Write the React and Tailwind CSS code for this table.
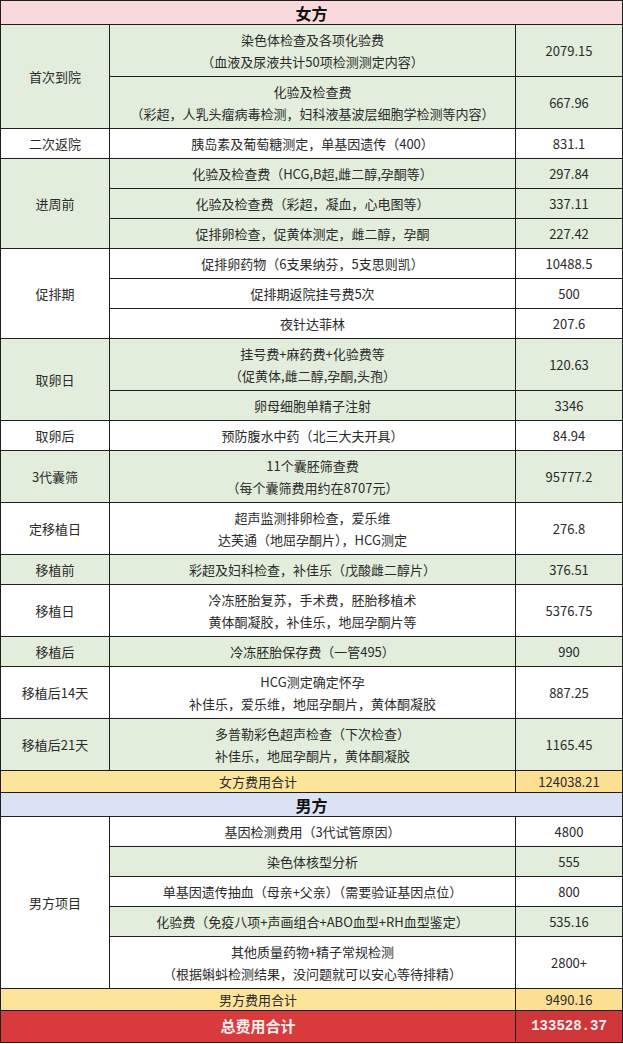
import React from "react";

const GREEN = "bg-[#e2eedb]";
const WHITE = "bg-white";

const female = [
  {
    label: "首次到院",
    bg: GREEN,
    items: [
      { lines: ["染色体检查及各项化验费", "（血液及尿液共计50项检测测定内容）"], value: "2079.15" },
      { lines: ["化验及检查费", "（彩超，人乳头瘤病毒检测，妇科液基波层细胞学检测等内容）"], value: "667.96" },
    ],
  },
  { label: "二次返院", bg: WHITE, items: [{ lines: ["胰岛素及葡萄糖测定，单基因遗传（400）"], value: "831.1" }] },
  {
    label: "进周前",
    bg: GREEN,
    items: [
      { lines: ["化验及检查费（HCG,B超,雌二醇,孕酮等）"], value: "297.84" },
      { lines: ["化验及检查费（彩超，凝血，心电图等）"], value: "337.11" },
      { lines: ["促排卵检查，促黄体测定，雌二醇，孕酮"], value: "227.42" },
    ],
  },
  {
    label: "促排期",
    bg: WHITE,
    items: [
      { lines: ["促排卵药物（6支果纳芬，5支思则凯）"], value: "10488.5" },
      { lines: ["促排期返院挂号费5次"], value: "500" },
      { lines: ["夜针达菲林"], value: "207.6" },
    ],
  },
  {
    label: "取卵日",
    bg: GREEN,
    items: [
      { lines: ["挂号费+麻药费+化验费等", "（促黄体,雌二醇,孕酮,头孢）"], value: "120.63" },
      { lines: ["卵母细胞单精子注射"], value: "3346" },
    ],
  },
  { label: "取卵后", bg: WHITE, items: [{ lines: ["预防腹水中药（北三大夫开具）"], value: "84.94" }] },
  { label: "3代囊筛", bg: GREEN, items: [{ lines: ["11个囊胚筛查费", "（每个囊筛费用约在8707元）"], value: "95777.2" }] },
  { label: "定移植日", bg: WHITE, items: [{ lines: ["超声监测排卵检查，爱乐维", "达芙通（地屈孕酮片），HCG测定"], value: "276.8" }] },
  { label: "移植前", bg: GREEN, items: [{ lines: ["彩超及妇科检查，补佳乐（戊酸雌二醇片）"], value: "376.51" }] },
  { label: "移植日", bg: WHITE, items: [{ lines: ["冷冻胚胎复苏，手术费，胚胎移植术", "黄体酮凝胶，补佳乐，地屈孕酮片等"], value: "5376.75" }] },
  { label: "移植后", bg: GREEN, items: [{ lines: ["冷冻胚胎保存费（一管495）"], value: "990" }] },
  { label: "移植后14天", bg: WHITE, items: [{ lines: ["HCG测定确定怀孕", "补佳乐，爱乐维，地屈孕酮片，黄体酮凝胶"], value: "887.25" }] },
  { label: "移植后21天", bg: GREEN, items: [{ lines: ["多普勒彩色超声检查（下次检查）", "补佳乐，地屈孕酮片，黄体酮凝胶"], value: "1165.45" }] },
];

const male = [
  {
    label: "男方项目",
    bg: WHITE,
    items: [
      { lines: ["基因检测费用（3代试管原因）"], value: "4800", bg: WHITE },
      { lines: ["染色体核型分析"], value: "555", bg: GREEN },
      { lines: ["单基因遗传抽血（母亲+父亲）（需要验证基因点位）"], value: "800", bg: WHITE },
      { lines: ["化验费（免疫八项+声画组合+ABO血型+RH血型鉴定）"], value: "535.16", bg: GREEN },
      { lines: ["其他质量药物+精子常规检测", "（根据蝌蚪检测结果，没问题就可以安心等待排精）"], value: "2800+", bg: WHITE },
    ],
  },
];

const SPAN = {
  1: "row-span-1",
  2: "row-span-2",
  3: "row-span-3",
  5: "row-span-5",
};

function Group({ g }) {
  return (
    <>
      <div className={`${SPAN[g.items.length]} col-start-1 ${g.bg} flex items-center justify-center text-[13px]`}>
        {g.label}
      </div>
      {g.items.map((it, i) => {
        const bg = it.bg || g.bg;
        const h = it.lines.length > 1 ? "h-[51px]" : "h-[29px]";
        return (
          <React.Fragment key={i}>
            <div className={`col-start-2 ${bg} ${h} flex flex-col items-center justify-center text-[13px] leading-[22px] text-center`}>
              {it.lines.map((l, j) => (
                <div key={j} className="whitespace-nowrap">{l}</div>
              ))}
            </div>
            <div className={`col-start-3 ${bg} ${h} flex items-center justify-center text-[13px]`}>{it.value}</div>
          </React.Fragment>
        );
      })}
    </>
  );
}

export default function App() {
  return (
    <div className="w-[623px] h-[1044px] bg-white" style={{ fontFamily: '"Noto Sans CJK SC", "Noto Sans", sans-serif' }}>
      <div className="w-[623px] grid grid-cols-[108px_405px_106px] gap-px bg-[#1e1e1e] border border-[#1e1e1e] text-[#2a2a2a]">
        <div className="col-span-3 h-[23px] bg-[#f8d9dc] flex items-center justify-center text-[16px] font-bold text-[#111]">
          女方
        </div>
        {female.map((g, i) => (
          <Group key={i} g={g} />
        ))}
        <div className="col-span-2 h-[21px] bg-[#fde49b] flex items-center justify-center text-[13px]">女方费用合计</div>
        <div className="h-[21px] bg-[#fddf93] flex items-center justify-center text-[13px]">124038.21</div>
        <div className="col-span-3 h-[23px] bg-[#dbe2f3] flex items-center justify-center text-[16px] font-bold text-[#111]">
          男方
        </div>
        {male.map((g, i) => (
          <Group key={i} g={g} />
        ))}
        <div className="col-span-2 h-[21px] bg-[#fde49b] flex items-center justify-center text-[13px]">男方费用合计</div>
        <div className="h-[21px] bg-[#fddf93] flex items-center justify-center text-[13px]">9490.16</div>
        <div className="col-span-2 h-[31px] bg-[#d93a3c] flex items-center justify-center text-[15px] font-bold text-[#fdeeee]">
          总费用合计
        </div>
        <div
          className="h-[31px] bg-[#cf3639] flex items-center justify-center text-[14px] font-bold text-[#fdeeee]"
          style={{ fontFamily: '"Liberation Mono", monospace' }}
        >
          133528.37
        </div>
      </div>
    </div>
  );
}
